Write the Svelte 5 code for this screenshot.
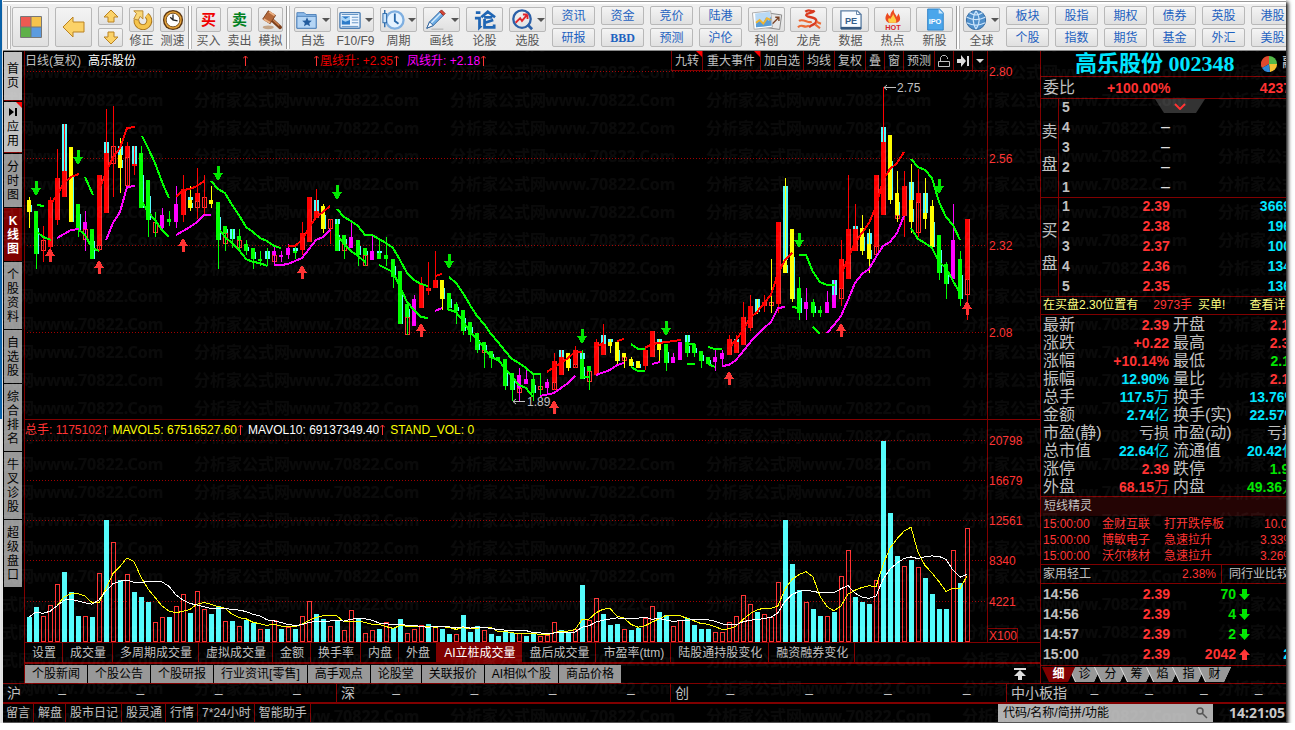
<script lang="ts">
  type Tool = { icon: string; label: string; drop?: boolean };

  const tradeTools: Tool[] = [
    { icon: 'buy', label: '买入' },
    { icon: 'sell', label: '卖出' },
    { icon: 'hammer', label: '模拟' }
  ];
  const viewTools: Tool[] = [
    { icon: 'folder', label: '自选', drop: true },
    { icon: 'news', label: 'F10/F9', drop: true },
    { icon: 'period', label: '周期', drop: true },
    { icon: 'pencil', label: '画线', drop: true },
    { icon: 'forum', label: '论股' },
    { icon: 'pick', label: '选股', drop: true }
  ];
  const dataTools: Tool[] = [
    { icon: 'photos', label: '科创' },
    { icon: 'dragon', label: '龙虎' },
    { icon: 'pe', label: '数据' },
    { icon: 'hot', label: '热点' },
    { icon: 'ipo', label: '新股' }
  ];
  const leftLinks = [['资讯', '研报'], ['资金', 'BBD'], ['竞价', '预测'], ['陆港', '沪伦']];
  const rightLinks = [
    ['板块', '个股'], ['股指', '指数'], ['期权', '期货'],
    ['债券', '基金'], ['英股', '外汇'], ['港股', '美股']
  ];

  const sideTabs = ['首页', '应用', '分时图', 'K线图', '个股资料', '自选股', '综合排名', '牛叉诊股', '超级盘口'];
  const chartTools = ['九转', '重大事件', '加自选', '均线', '复权', '叠', '窗', '预测'];
  const indicators = [
    '设置', '成交量', '多周期成交量', '虚拟成交量', '金额', '换手率', '内盘', '外盘',
    'AI立桩成交量', '盘后成交量', '市盈率(ttm)', '陆股通持股变化', '融资融券变化'
  ];
  const newsTabs = ['个股新闻', '个股公告', '个股研报', '行业资讯[零售]', '高手观点', '论股堂', '关联报价', 'AI相似个股', '商品价格'];
  const footLinks = ['留言', '解盘', '股市日记', '股灵通', '行情', '7*24小时', '智能助手'];
  const markets = ['沪', '深', '创', '中小板指'];
  const detailTabs = ['细', '诊', '分', '筹', '焰', '指', '财'];

  const bids = [['1', '2.39', '3669'], ['2', '2.38', '196'], ['3', '2.37', '100'], ['4', '2.36', '134'], ['5', '2.35', '136']];
  const asks = ['5', '4', '3', '2', '1'];

  // label, value, unit, tone for each half of a row
  const stats = [
    [['最新', '2.39', '', 'up'], ['开盘', '2.18', '', 'up']],
    [['涨跌', '+0.22', '', 'up'], ['最高', '2.39', '', 'up']],
    [['涨幅', '+10.14%', '', 'up'], ['最低', '2.11', '', 'down']],
    [['振幅', '12.90%', '', 'info'], ['量比', '2.15', '', 'up']],
    [['总手', '117.5', '万', 'info'], ['换手', '13.76%', '', 'info']],
    [['金额', '2.74', '亿', 'info'], ['换手(实)', '22.57%', '', 'info']],
    [['市盈(静)', '', '亏损', 'flat'], ['市盈(动)', '', '亏损', 'flat']],
    [['总市值', '22.64', '亿', 'info'], ['流通值', '20.42', '亿', 'info']],
    [['涨停', '2.39', '', 'up'], ['跌停', '1.95', '', 'down']],
    [['外盘', '68.15', '万', 'up'], ['内盘', '49.36', '万', 'down']]
  ];
  const alerts = [
    ['15:00:00', '金财互联', '打开跌停板', '10.02'],
    ['15:00:00', '博敏电子', '急速拉升', '3.33%'],
    ['15:00:00', '沃尔核材', '急速拉升', '3.26%']
  ];
  const ticks = [
    ['14:56', '2.39', '70', 'down', ''],
    ['14:56', '2.39', '4', 'down', ''],
    ['14:57', '2.39', '2', 'down', ''],
    ['15:00', '2.39', '2042', 'up', '2']
  ];

  const left = 29;
  const step = 7;
  const base = 642;
  const tones: Record<string, string> = { r: '#ff0000', y: '#ffff00', g: '#00ff00', m: '#ff00ff', c: '#54fcfc', h: '#ff3232' };

  // high low wick body...
  const candles = `197 228 y y200-212/211 269 g g211-254/226 262 r h240-251/197 250 r r200-247/149 225 r r178-220/124 197 r c124-171 r171-197/147 222 y y147-222/204 237 g g204-230/211 251 m m222-229 h229-240/229 259 g g229-259
/175 251 r r175-245 h245-250/109 213 r c142-153 r153-213/106 197 r h146-164/138 193 y c146-155 y155-168/142 186 r r146-157 h157-186/146 175 r c146-164 r164-166/146 208 g g153-208/180 237 g g180-220/212 237 g h222-233/208 232 m m215-228
/211 226 g g219-222/186 228 m m204-222/175 222 r r189-215/186 211 y c197-200 y200-208/168 219 r r193-201 h201-208/175 215 r h197-208/186 208 y y200-204/202 269 g g202-240/226 251 g g226-233 h233-244/229 248 g c229-239
/229 251 g g236-240 h240-248/240 255 g g244-251/248 269 g g248-259/251 266 g g259-261/248 266 g c251-259/247 266 m m251-255 h255-262/251 262 m m255-257/244 259 m m248-255/247 259 g c248-251 g251-253/222 255 r r233-250
/197 242 r r197-242/189 218 r c200-211 r211-218/204 233 y y206-229/219 244 r h219-229/219 251 g c219-224 g224-251/235 259 g g235-244 h244-251/221 248 m m237-248/240 266 g g240-255/248 266 g g248-255 h255-266/236 260 m m251-260
/240 259 g c251-253 g253-259/237 266 g g255-259/259 288 g g259-277/271 324 g g271-324/304 335 g g304-317 h317-335/295 326 m m299-326/277 308 r r284-308/262 295 r r288-291/251 288 r r280-288/280 310 y y280-299
/293 308 g g293-308/302 324 g g304-311/310 335 g g310-331/322 342 g g322-335/333 353 g g333-350/342 368 g g342-350 h350-353/351 368 g g351-358/357 361 g g357-361/359 390 g g359-386/373 401 g g373-390
/368 401 m m375-388 h388-393/369 384 m m379-384/374 401 g g379-393/374 396 g h386-390/379 394 m m382-388/353 390 r r361-382 h382-390/350 375 r c350-357 r357-375/353 371 y y353-368/346 368 r r350-364 h364-368/350 379 g c353-359 g359-379
/366 390 g g366-371 h371-382/339 375 r r342-375/324 355 r c335-344 r344-355/339 353 y c339-342 y342-346/342 364 y y342-361/353 368 y y353-357 h357-361/357 366 y y359-366/361 368 y y361-368/346 370 r r350-366/331 357 r r331-357
/339 361 y c339-344 y344-350/344 371 g g344-363/353 363 m m357-363/342 360 m m342-360/335 357 g c335-342 g342-353/344 357 g g344-353/351 368 g g351-361/357 364 g g357-364/349 371 m m357-362/350 366 m m353-359
/335 355 r r339-355/335 353 r c339-342 r342-353/302 345 r r317-345/295 331 r r306-328/299 314 y c299-312/295 312 r r302-306/259 313 y h302-306/222 313 r r222-304/178 273 y c186-260 y260-273/229 302 y y229-299
/277 320 g g288-313/288 320 m m302-309/299 317 g g302-313/306 317 g g310-313/291 313 m m302-313/280 308 m c280-295 m295-308/240 306 r r259-288 h288-299/175 279 r r229-279/204 251 r c226-229 r229-251/215 255 y y228-251
/229 273 y c233-244 y244-259/175 255 r r175-246 h246-255/87 215 r c127-142 r142-215/135 204 y y135-200/171 222 y y193-215 h215-219/171 237 r r186-216/164 233 y c182-200 y200-222/169 237 r r193-202 h202-233/178 229 y c193-213 y213-219/200 251 y y206-247
/235 280 g g235-273/262 299 g g264-284/204 279 m m240-279/251 306 g g259-299/219 320 r r219-279 h279-295`
    .replace(/\n/g, '')
    .split('/')
    .map((row, i) => {
      const [high, low, wick, ...parts] = row.split(' ');
      const bodies = parts.map((p) => {
        const [top, bottom] = p.slice(1).split('-').map(Number);
        return { kind: p[0], top, size: bottom - top };
      });
      return { x: left + i * step, high: +high, low: +low, wick: tones[wick], bodies };
    });

  const trends: [string, string[]][] = [
    ['r', [
      '50,205 57,195 64,183 71,177 79,174', '100,187 106,173 113,157 120,148 127,128 135,127',
      '176,197 183,190 190,189 197,186 204,181', '288,246 295,246 302,240 309,228 316,217 323,212 330,206',
      '435,276 442,274', '547,372 554,367 561,363 568,358 575,352 582,352', '595,348 603,343', '617,341 624,339',
      '645,348 652,344 666,342 681,340',
      '729,348 736,340 743,330 750,318 757,312 764,303 771,295 778,273 785,260 792,253',
      '841,275 848,258 855,243 862,233 869,223 876,207 883,180 890,169 897,163 904,152'
    ]],
    ['g', [
      '37,205 44,206', '85,177 89,186 93,195', '36,231 43,237 51,240', '77,228 85,235 92,248 99,251',
      '142,136 148,148 155,163 162,182 169,198', '141,200 148,212 155,220 162,230 169,237',
      '211,181 218,189 225,193 232,205 239,215 246,227 253,232 260,238 267,241 274,246 281,248',
      '218,228 225,237 232,243 239,250 246,259 253,262 260,263 267,266',
      '337,209 344,217 351,221 358,226 365,235 372,235 379,239 386,243 393,248 400,260 407,273 414,280 421,284 428,286',
      '337,235 344,244 351,251 358,256 365,262', '379,265 393,272 400,287 407,302 414,310 421,317 428,318',
      '449,277 456,283 463,293 470,305 477,316 484,324 491,334 498,342 505,351 512,359 519,363 526,368 533,374 541,374',
      '447,309 456,312 463,321 470,332 477,339 484,348 491,357 498,360 505,368 512,377 519,385 526,388 533,397',
      '580,377 589,377', '631,344 638,349 645,349', '631,367 638,371 645,371', '687,344 695,344', '687,364 695,364',
      '708,347 715,349 722,349', '708,364 715,367', '799,255 806,255 813,272 820,282 827,285 835,285',
      '792,307 799,308', '813,327 820,334',
      '911,159 918,167 925,170 932,178 939,202 946,217 953,225 960,240',
      '911,228 918,239 925,243 932,248 939,262 946,268 953,281 960,293'
    ]],
    ['m', [
      '57,238 71,230 79,229', '106,240 113,223 120,212 127,187 135,186', '176,235 190,227 197,222 204,215 211,215',
      '274,265 281,265 288,264 295,261 302,258 309,249 316,240 323,237 330,230', '435,311 442,308',
      '540,396 554,393 561,388 568,383 575,376', '596,375 610,370 617,365 624,363', '652,364 660,362',
      '722,366 729,365 736,360 753,339 764,328 771,322 778,308 785,307',
      '827,333 834,325 841,316 848,300 855,283 862,274 869,269 876,257 883,246 890,242 897,233 904,216'
    ]]
  ];
  const sells = [[36, 188], [78, 157], [218, 173], [337, 192], [449, 261], [582, 336], [666, 328], [799, 240], [939, 186]];
  const buys = [[50, 255], [99, 267], [183, 245], [302, 272], [421, 330], [554, 407], [729, 378], [841, 330], [967, 308]];

  const volumes = `25c 35c 26r 37r 58r 70c 50c 26c 26r 25c 69r 122c 100r 62c 68r 50c 45c 40c 20r 25r 25c 36r 48r 29c 51r 33r 28c 36c 21r 21c
16r 22c 19c 13r 13c 22r 13c 15r 13c 26r 41r 28c 23c 16r 22c 12r 32r 23c 9r 12r 13c 20r 14c 23c 9r 13r 17r 18c 16r 13c
8c 8r 27c 10c 16c 12r 8c 6c 11c 9c 9r 6c 8c 6r 7r 20r 12c 10c 13r 57c 22r 44r 28c 17c 18c 13r 12c 14c 24r 36r
30c 27c 16r 22r 24c 17c 13c 13c 10r 10r 20r 26r 47r 38r 30c 28r 25r 60r 122c 78c 52c 40r 33c 26c 26r 30c 66r 92r 45c 40c
38c 62r 201c 129c 86c 76r 82c 75r 64c 48c 33c 33c 92r 59c 114r`
    .split(/\s+/)
    .map((v, i) => ({ x: left + i * step, size: parseInt(v), down: v.endsWith('c') }));

  function average(span: number): string {
    return volumes
      .map((v, i) => {
        const part = volumes.slice(Math.max(0, i - span + 1), i + 1);
        const mean = part.reduce((sum, p) => sum + p.size, 0) / part.length;
        return `${v.x},${(base - mean).toFixed(1)}`;
      })
      .join(' ');
  }

  const priceLines: [number, string][] = [[71, '2.80'], [158, '2.56'], [245, '2.32'], [332, '2.08']];
  const volumeLines: [number, string][] = [[441, '20798'], [481, '16679'], [521, '12561'], [561, '8340'], [602, '4221']];

  let activeSide = $state('K线图');
  let activeIndicator = $state('AI立桩成交量');
  let activeDetail = $state('细');
  let query = $state('');
</script>

{#snippet icon(name: string)}
  <svg class="icon" viewBox="0 0 24 24" width="24" height="24" aria-hidden="true">
    {#if name === 'repair'}
      <path d="M6 12 A7 7 0 1 0 17 7" fill="none" stroke="#a8741c" stroke-width="6.500" />
      <path d="M6 12 A7 7 0 1 0 17 7" fill="none" stroke="#f5c44c" stroke-width="4.500" />
      <path d="M3 2 H13 V11 L10 8 L8 12 L3 11 L6 5 Z" fill="#f9d778" stroke="#b8842a" />
    {:else if name === 'clock'}
      <circle cx="12" cy="12" r="11" fill="#5a3510" />
      <circle cx="12" cy="12" r="9.500" fill="#e9a63a" />
      <circle cx="12" cy="12" r="7.500" fill="#fff" stroke="#6b4518" />
      <path d="M12 6 V12 L17 13 M12 12 L9 9" fill="none" stroke="#222" stroke-width="1.400" />
    {:else if name === 'hammer'}
      <path d="M11 10 L22 20" stroke="#7d3f1b" stroke-width="4" stroke-linecap="round" />
      <path d="M11 9 L21 18" stroke="#c98150" stroke-width="1.500" />
      <path d="M9 2 L17 7 L11 16 L3 11 Z" fill="#b4693b" stroke="#7a401f" />
      <path d="M10 3 L16 7 M4 11 L11 15" stroke="#ecb184" stroke-width="2" />
      <ellipse cx="9" cy="20" rx="6" ry="2" fill="#c4a487" />
    {:else if name === 'folder'}
      <path d="M1 4 H9 L11 6 H22 V21 H1 Z" fill="#8dbbea" stroke="#4b7fb8" />
      <path d="M1 8 H22 V21 H1 Z" fill="#b4d5f5" stroke="#4b7fb8" />
      <path d="M12 9 l1.500 3.500 3.800 .3 -2.900 2.400 .9 3.700 -3.300 -2 -3.300 2 .9 -3.700 -2.900 -2.400 3.800 -.3 Z" fill="#235c9e" />
    {:else if name === 'news'}
      <rect x="1" y="4" width="22" height="17" rx="1" fill="#eef6ff" stroke="#4d7fb5" stroke-width="1.500" />
      <rect x="3" y="8" width="9" height="9" fill="#2e7cc9" />
      <path d="M3 8 L7 11 L12 8 V12 L7 14 L3 12 Z" fill="#a9d5f8" />
      <path d="M3 6 H21 M14 9 H21 M14 12 H21 M14 15 H21 M3 19 H21" stroke="#5a8dc2" />
    {:else if name === 'period'}
      <circle cx="14" cy="12" r="9.500" fill="#e4f2ff" stroke="#7fafe0" stroke-width="2.500" />
      <path d="M14 5 V13 L18 16" fill="none" stroke="#2868aa" stroke-width="2" />
      <path d="M3 1 V20" stroke="#2868aa" stroke-width="1.500" />
      <rect x="1" y="5" width="4" height="10" fill="#cce4fa" stroke="#2868aa" />
    {:else if name === 'pencil'}
      <path d="M2 21 L5 14 L16 3 L20 7 L9 18 Z" fill="#6eaee6" stroke="#2c5f99" />
      <path d="M16 3 L18 1 L22 5 L20 7 Z" fill="#d84436" stroke="#8f2b22" />
      <path d="M2 21 L5 14 L9 18 Z" fill="#fff" stroke="#2c5f99" />
      <path d="M7 15 L17 5" stroke="#d7ecfd" stroke-width="1.500" />
      <path d="M7 22 H20" stroke="#bbb" stroke-width="1.500" />
    {:else if name === 'forum'}
      <path d="M2 4 H7 M1 10 H6 V20 L8 18 M8 9 L15 3 L23 9 M11 9 H20 M11.500 11 V20 H22 V17 M21 12 L12 15" fill="none" stroke="#2066b4" stroke-width="3" />
    {:else if name === 'pick'}
      <circle cx="12" cy="11" r="9.500" fill="none" stroke="#2b60a8" stroke-width="2.500" />
      <path d="M18 17 L23 22" stroke="#2b60a8" stroke-width="3" />
      <path d="M5 15 L10 10 L12 13 L17 7 M18 6 H13 M18 6 V11" fill="none" stroke="#e0262d" stroke-width="2" />
    {:else if name === 'photos'}
      <rect x="12" y="5" width="15" height="16" fill="#e6e6e6" stroke="#888" transform="rotate(8 17 13)" />
      <path d="M18 16 L25 9 M21 9 H25 V13" fill="none" stroke="#7a4326" stroke-width="1.500" />
      <rect x="-3" y="3" width="20" height="18" fill="#fff" stroke="#aaa" transform="rotate(-6 8 12)" />
      <path d="M-1 5 L15 3 L17 18 L0 20 Z" fill="#b9d9f4" />
      <path d="M0 16 L4 12 L8 15 L11 9 L14 13 L16 8 L17 18 L0 20 Z" fill="#5b9dd6" />
      <path d="M0 15 L4 12 L8 16 L12 10 L16 12" fill="none" stroke="#f1b52e" stroke-width="2" />
    {:else if name === 'dragon'}
      <path d="M8 3 C13 -1 14 4 18 2 C15 6 9 3 9 7 C11 10 20 8 20 13 C20 17 14 17 12 20" fill="none" stroke="#d83a20" stroke-width="2.600" />
      <path d="M1 13 C6 10 11 16 15 14 M0 20 C4 15 7 22 12 18 M19 17 L24 21 M20 14 L25 16" fill="none" stroke="#ec6a35" stroke-width="2.400" />
    {:else if name === 'pe'}
      <path d="M1 2 H19 L23 6 V21 H1 Z" fill="#f8fbff" stroke="#5e7fa4" stroke-width="1.500" />
      <path d="M18 2 V6 H23" fill="none" stroke="#5e7fa4" />
      <path d="M1 21 H23" stroke="#35587f" stroke-width="3" />
      <text x="12" y="16" class="glyph" fill="#36608d">PE</text>
    {:else if name === 'hot'}
      <path d="M7 15 C1 11 5 6 6 4 C7 7 8 7 9 8 C9 5 10 3 13 0 C12 5 16 6 16 9 L18 5 C21 11 20 14 16 15 Z" fill="#ec4a20" />
      <path d="M8 15 C5 11 8 9 9 11 C10 9 12 8 12 5 C13 9 17 12 15 15 Z" fill="#ffcf45" />
      <text x="12" y="23" class="glyph small" fill="#d9292b">HOT</text>
    {:else if name === 'ipo'}
      <path d="M4 0 H17 L21 4 V23 H4 Z" fill="#4ba6eb" stroke="#2c7fc4" />
      <path d="M16 0 V5 H21 Z" fill="#cfe8fb" />
      <text x="12" y="16" class="glyph small" fill="#fff">IPO</text>
    {:else if name === 'globe'}
      <circle cx="12" cy="12" r="10.500" fill="#4f8fca" stroke="#2d649c" />
      <path d="M2 9 Q12 14 22 9 M2 15 Q12 20 22 15 M12 2 Q6 12 12 22 M12 2 Q19 12 12 22 M5 4 Q12 9 19 4" fill="none" stroke="#cbe4fa" stroke-width="1.400" />
    {/if}
  </svg>
{/snippet}

{#snippet rise()}
  <svg class="rise" viewBox="0 0 5 11" width="5" height="11" aria-hidden="true"><path d="M2.500 1 V11 M0 3.500 L2.500 1 L5 3.500" /></svg>
{/snippet}

{#snippet toolItem(tool: Tool, wide: boolean)}
  <button type="button" class="tool" class:wide>
    <span class="face">
      {#if tool.icon === 'buy' || tool.icon === 'sell'}
        <b class={tool.icon}>{tool.label[0]}</b>
      {:else}
        {@render icon(tool.icon)}
      {/if}
      {#if tool.drop}<i class="drop"></i>{/if}
    </span>
    <span class="caption">{tool.label}</span>
  </button>
{/snippet}

{#snippet linkPair(pair: string[])}
  <div class="stack">
    {#each pair as name}
      <button type="button" class="link" class:serif={name === 'BBD'}>{name}</button>
    {/each}
  </div>
{/snippet}

{#snippet mark(x: number, y: number, up: boolean)}
  <path
    d={up
      ? `M${x} ${y - 7} l5 8 h-3 v6 h-3 v-6 h-4 z`
      : `M${x} ${y + 8} l5 -8 h-3 v-7 h-3 v7 h-4 z`}
    fill={up ? '#ff3232' : '#00e600'}
  />
{/snippet}

<div class="window">
  <div class="toolbar">
    <i class="grip"></i>
    <button type="button" class="big" aria-label="首页">
      <svg viewBox="0 0 22 22" width="22" height="22">
        <rect x="1" y="1" width="10" height="10" fill="#ee5a52" />
        <rect x="11" y="1" width="10" height="10" fill="#f5c34c" />
        <rect x="1" y="11" width="10" height="10" fill="#5fb04a" />
        <rect x="11" y="11" width="10" height="10" fill="#5b9bdf" />
        <path d="M.5 .5 H21.500 V21.500 H.5 Z M11 1 V21 M1 11 H21" fill="none" stroke="#777" />
      </svg>
    </button>
    <button type="button" class="big" aria-label="返回">
      <svg viewBox="0 0 24 22" width="24" height="22">
        <path d="M1 11 L11 1 V6 H22 V16 H11 V21 Z" fill="#fbd268" stroke="#b98222" />
      </svg>
    </button>
    <div class="stack arrows">
      <button type="button" class="link" aria-label="上翻">
        <svg viewBox="0 0 16 14" width="16" height="14"><path d="M8 1 L15 8 H11 V13 H5 V8 H1 Z" fill="#fbd268" stroke="#b98222" /></svg>
      </button>
      <button type="button" class="link" aria-label="下翻">
        <svg viewBox="0 0 16 14" width="16" height="14"><path d="M8 13 L15 6 H11 V1 H5 V6 H1 Z" fill="#fbd268" stroke="#b98222" /></svg>
      </button>
    </div>
    {@render toolItem({ icon: 'repair', label: '修正' }, false)}
    {@render toolItem({ icon: 'clock', label: '测速' }, false)}
    <i class="grip split"></i>
    {#each tradeTools as tool}{@render toolItem(tool, false)}{/each}
    <i class="grip split"></i>
    {#each viewTools as tool}{@render toolItem(tool, true)}{/each}
    {#each leftLinks as pair}{@render linkPair(pair)}{/each}
    <div class="group">
      {#each dataTools as tool}{@render toolItem(tool, true)}{/each}
    </div>
    <i class="grip"></i>
    {@render toolItem({ icon: 'globe', label: '全球', drop: true }, true)}
    {#each rightLinks as pair}{@render linkPair(pair)}{/each}
  </div>

  <div class="main">
    <nav class="side">
      {#each sideTabs as name, i}
        <button type="button" class:light={i < 2} class:active={activeSide === name} onclick={() => (activeSide = name)}>
          {#if name === '应用'}
            <svg viewBox="0 0 8 8" width="8" height="8" aria-hidden="true"><path d="M0 0 L5 4 L0 8 Z M6 0 H8 V8 H6 Z" /></svg>
            <i class="corner"></i>
          {/if}
          <span>{name}</span>
        </button>
      {/each}
    </nav>

    <section class="charts">
      <header class="chart-head">
        <div class="titles">
          <span>日线(复权)</span>
          <span class="white">高乐股份</span>
          <span class="signal first">{@render rise()}</span>
          <span class="signal second">{@render rise()}凰线升: +2.35{@render rise()}</span>
          <span class="magenta">凤线升: +2.18{@render rise()}</span>
        </div>
        <div class="chart-tools">
          {#each chartTools as name, i}
            <button type="button">{name}{#if i < 2}<i class="corner"></i>{/if}</button>
          {/each}
          <button type="button" aria-label="锁定">
            <svg viewBox="0 0 12 14" width="12" height="14"><path d="M.5 7.500 H11.500 V12.500 H.5 Z M2.500 7 V3.500 L4.500 1.500 H7.500 L9.500 3.500 V5" fill="none" stroke="#c0c0c0" /></svg>
          </button>
          <button type="button" aria-label="最新">
            <svg viewBox="0 0 12 12" width="12" height="12"><path d="M0 4 H4 V0 L9 6 L4 12 V8 H0 Z M10 1 H12 V11 H10 Z" fill="#ddd" /></svg>
          </button>
          <button type="button" aria-label="更多"><i class="drop pale"></i></button>
        </div>
      </header>

      <svg class="plot" viewBox="25 71 1015 348" role="img" aria-label="日线">
        <g shape-rendering="crispEdges">
          {#each priceLines as [y]}
            <path class="grid" d={`M27 ${y + 0.5} H987`} />
          {/each}
          <path class="frame" d="M987.500 71 V419" />
          {#each candles as c}
            {#each c.bodies as b}
              {#if b.kind === 'h'}
                <rect x={c.x - 1.5} y={b.top + 0.5} width="4" height={Math.max(1, b.size - 1)} fill="none" stroke={tones.h} />
              {:else}
                <rect x={c.x - 2} y={b.top} width={b.kind === 'c' ? 5 : 4} height={b.size} fill={tones[b.kind]} />
                {#if b.kind === 'r'}
                  <rect x={c.x + 2} y={b.top} width="1" height={b.size} fill={tones.h} />
                {:else if b.kind !== 'c' && b.kind !== 'm' && b.size > 6}
                  <rect x={c.x + 2} y={b.top + b.size * 0.4} width="1" height={b.size * 0.6} fill={tones.c} />
                {/if}
              {/if}
            {/each}
            <rect x={c.x} y={c.high} width="1" height={c.low - c.high} fill={c.wick} />
          {/each}
          {#each trends as [tone, lines]}
            {#each lines as points}
              <polyline {points} fill="none" stroke={tones[tone]} stroke-width="2" />
            {/each}
          {/each}
          {#each sells as [x, y]}{@render mark(x, y, false)}{/each}
          {#each buys as [x, y]}{@render mark(x, y, true)}{/each}
        </g>
        <path d="M884 87.500 H896 M887 85 L884 87.500 L887 90 M513 401.500 H525 M516 399 L513 401.500 L516 404" fill="none" stroke="#c0c0c0" />
        <text class="note" x="897" y="92">2.75</text>
        <text class="note" x="527" y="406">1.89</text>
        {#each priceLines as [y, label]}
          <text class="scale" x="989" y={y + 5}>{label}</text>
        {/each}
      </svg>

      <div class="volume-head">
        <span class="red">总手: 1175102{@render rise()}</span>
        <span class="yellow">MAVOL5: 67516527.60{@render rise()}</span>
        <span class="white">MAVOL10: 69137349.40{@render rise()}</span>
        <span class="yellow">STAND_VOL: 0</span>
      </div>

      <svg class="plot" viewBox="25 440 1015 202" role="img" aria-label="成交量">
        <g shape-rendering="crispEdges">
          {#each volumeLines as [y]}
            <path class="grid" d={`M27 ${y - 0.5} H987`} />
          {/each}
          <path class="frame" d="M987.500 419 V642 M988 628.500 H1017.500 V642" />
          {#each volumes as v}
            {#if v.down}
              <rect x={v.x - 2} y={base - v.size} width="5" height={v.size} fill={tones.c} />
            {:else}
              <rect x={v.x - 1.5} y={base - v.size + 0.5} width="4" height={v.size - 1} fill="none" stroke={tones.h} />
            {/if}
          {/each}
          <polyline points={average(5)} fill="none" stroke="#ffff00" />
          <polyline points={average(10)} fill="none" stroke="#ffffff" />
        </g>
        {#each volumeLines as [y, label]}
          <text class="scale" x="989" y={y + 4}>{label}</text>
        {/each}
        <text class="scale" x="989" y="640">X100</text>
      </svg>

      <div class="indicators">
        {#each indicators as name}
          <button type="button" class:active={activeIndicator === name} onclick={() => (activeIndicator = name)}>{name}</button>
        {/each}
      </div>
      <div class="news-tabs">
        {#each newsTabs as name}<button type="button">{name}</button>{/each}
        <svg viewBox="0 0 12 12" width="12" height="12" aria-hidden="true"><path d="M0 0 H12 V2 H0 Z M6 2 L12 8 H8 V12 H4 V8 H0 Z" fill="#ddd" /></svg>
      </div>
    </section>

    <aside class="quote">
      <div class="sheet">
        <h1>
          高乐股份 002348
          <svg viewBox="0 0 16 16" width="16" height="16" aria-hidden="true">
            <path d="M8 8 V0 A8 8 0 0 0 1 12 Z" fill="#e0492d" />
            <path d="M8 8 V0 A8 8 0 0 1 16 8 Z" fill="#54b948" />
            <path d="M8 8 H16 A8 8 0 0 1 9 16 Z" fill="#f5c030" />
            <path d="M8 8 L9 16 A8 8 0 0 1 1 12 Z" fill="#2c86d6" />
          </svg>
          <small>融</small>
        </h1>
        <div class="ratio"><span>委比</span><b class="up">+100.00%</b><b class="up end">4237</b></div>
        <div class="book">
          <div class="book-side"><span>卖</span><span>盘</span></div>
          <div class="levels">
            {#each asks as level, i}
              <div class="level"><b>{level}</b><span class="blank">{i > 0 ? '–' : ''}</span></div>
            {/each}
            <button type="button" class="fold" aria-label="展开"><svg viewBox="0 0 12 7" width="12" height="7"><path d="M1 1 L6 6 L11 1" /></svg></button>
          </div>
        </div>
        <div class="book">
          <div class="book-side"><span>买</span><span>盘</span></div>
          <div class="levels">
            {#each bids as [level, price, size]}
              <div class="level"><b>{level}</b><b class="up">{price}</b><b class="info end">{size}</b></div>
            {/each}
          </div>
        </div>
        <div class="tip"><span>在买盘2.30位置有</span><span class="red">2973手</span><span>买单!</span><span class="more">查看详情</span></div>
        <div class="stats">
          {#each stats as row}
            {#each row as [label, value, unit, tone]}
              <span class="label">{label}</span>
              <b class={tone}>{value}{#if unit}<span class="unit">{unit}</span>{/if}</b>
            {/each}
          {/each}
        </div>
        <h2>短线精灵</h2>
        <div class="alerts">
          {#each alerts as row}
            <div>{#each row as cell}<span>{cell}</span>{/each}</div>
          {/each}
        </div>
        <div class="industry"><span>家用轻工</span><span class="red">2.38%</span><span class="peer">同行业比较</span></div>
        <div class="ticks">
          {#each ticks as [time, price, size, tone, orders]}
            <div class="tick">
              <b>{time}</b><b class="up">{price}</b><b class={tone}>{size}</b>
              <svg viewBox="0 0 11 11" width="11" height="11" aria-hidden="true">
                <path class={tone} d={tone === 'up' ? 'M5.500 0 L11 6 H8 V11 H3 V6 H0 Z' : 'M5.500 11 L11 5 H8 V0 H3 V5 H0 Z'} />
              </svg>
              <b class="info">{orders}</b>
            </div>
          {/each}
        </div>
        <div class="detail-tabs">
          {#each detailTabs as name}
            <button type="button" class:active={activeDetail === name} onclick={() => (activeDetail = name)}>{name}</button>
          {/each}
        </div>
      </div>
    </aside>
  </div>

  <div class="markets">
    {#each markets as name}
      <div><span class="name">{name}</span><span>–</span><span>–</span><span>–</span><span>–</span></div>
    {/each}
  </div>

  <footer>
    {#each footLinks as name}<a href="#foot">{name}</a>{/each}
    <div class="search">
      <input type="text" bind:value={query} placeholder="代码/名称/简拼/功能" aria-label="代码/名称/简拼/功能" />
      <svg viewBox="0 0 12 12" width="12" height="12" aria-hidden="true"><circle cx="4" cy="4" r="3" /><path d="M6 6 L11 11" /></svg>
    </div>
    <time>14:21:05</time>
  </footer>

  <svg class="watermark" aria-hidden="true">
    <defs>
      <pattern id="mark" width="256" height="28" patternUnits="userSpaceOnUse" x="191" y="8">
        <text x="0" y="19">分析家公式网</text>
        <text x="95" y="19">www.70822.Com</text>
      </pattern>
    </defs>
    <rect width="100%" height="100%" fill="url(#mark)" />
  </svg>
</div>

<style>
  :global(body) {
    margin: 0;
    background: linear-gradient(#0a64ad 58%, #e8e8e8 58%) 0 0 / 2px 100% no-repeat #fff;
  }

  .window {
    position: relative;
    margin: 0 9px 0 3px;
    background: #000;
    color: #c0c0c0;
    font: 12px/18px 'Liberation Sans', 'Noto Sans CJK SC', sans-serif;
    box-shadow: 2px 2px 4px #000;
    border-bottom: 1px solid #555;
  }

  .window * {
    box-sizing: border-box;
  }

  button {
    margin: 0;
    padding: 0;
    border: 0;
    background: none;
    color: inherit;
    font: inherit;
    white-space: nowrap;
  }

  i {
    font-style: normal;
  }

  .toolbar {
    display: flex;
    gap: 6px;
    height: 51px;
    padding: 3px 0 0 4px;
    overflow: hidden;
    border-top: 1px solid #fff;
    border-bottom: 1px solid #888;
    background: linear-gradient(#999 0, #999 1px, #fff 1px, #fff 3px, #efefef 3px, #ececec 100%);
    color: #555;
  }

  .toolbar > * {
    flex: none;
  }

  .group {
    display: flex;
    gap: 5px;
  }

  .grip {
    width: 4px;
    height: 43px;
    margin: 2px -3px 0 -3px;
    border-left: 1px solid #999;
    border-right: 1px solid #bbb;
    background: #fff;
  }

  .grip.split {
    margin-right: -2px;
  }

  .toolbar > .grip:first-child {
    margin-left: 0;
    margin-right: -5px;
  }

  .big,
  .face,
  .link {
    display: flex;
    align-items: center;
    justify-content: center;
    border: 1px solid #b8b8b8;
    border-radius: 2px;
    background: linear-gradient(#f4f4f4, #e0e0e0);
  }

  .big {
    width: 37px;
    height: 40px;
    margin-top: 3px;
  }

  .stack {
    display: flex;
    flex-direction: column;
    gap: 3px;
    width: 43px;
    padding-top: 2px;
  }

  .stack.arrows {
    width: 25px;
  }

  .link {
    height: 19px;
    color: #1e62c0;
    line-height: 16px;
  }

  .link.serif {
    font-family: 'Liberation Serif', serif;
    font-weight: bold;
  }

  .tool {
    display: flex;
    flex-direction: column;
    align-items: center;
    width: 25px;
    padding-top: 3px;
  }

  .tool.wide {
    width: 37px;
  }

  .face {
    width: 100%;
    height: 25px;
  }

  .face .icon {
    flex: none;
    width: 22px;
    height: 22px;
    overflow: visible;
  }

  .face b {
    font-size: 15px;
  }

  .buy {
    color: #f00000;
  }

  .sell {
    color: #008020;
  }

  .caption {
    line-height: 18px;
  }

  .drop {
    width: 0;
    height: 0;
    margin-left: 4px;
    border: 4px solid transparent;
    border-top-color: #555;
    border-bottom: 0;
  }

  .drop.pale {
    display: block;
    margin: 0;
    border-top-color: #ddd;
  }

  .glyph {
    font: bold 10px 'Liberation Sans', sans-serif;
    text-anchor: middle;
  }

  .glyph.small {
    font-size: 8px;
  }

  .main {
    display: flex;
    border-bottom: 1px solid #800000;
  }

  .side {
    display: flex;
    flex: none;
    flex-direction: column;
    gap: 1px;
    width: 22px;
    padding: 1px 2px 0 1px;
    border-right: 1px solid #800000;
    color: #000;
  }

  .side button {
    position: relative;
    display: flex;
    flex-direction: column;
    align-items: center;
    padding: 6px 0 5px;
    background: #989898;
    line-height: 14px;
    white-space: normal;
  }

  .side button.light {
    padding: 10px 0;
    background: #c0c0c0;
    border-bottom: 1px solid #800000;
  }

  .side button.light + .light {
    padding: 6px 0 4px;
  }

  .side button.active {
    background: #800000;
    color: #fff;
    font-weight: bold;
  }

  .side svg {
    margin-bottom: 4px;
  }

  .side span {
    width: 13px;
    word-break: break-all;
  }

  .corner {
    position: absolute;
    top: 0;
    right: 0;
    border: 3px solid #f00;
    border-left-color: transparent;
    border-bottom-color: transparent;
  }

  .charts {
    flex: 1;
    min-width: 0;
  }

  .chart-head {
    display: flex;
    justify-content: space-between;
    height: 20px;
    margin-right: 52px;
    border-right: 1px solid #800000;
  }

  .titles,
  .chart-tools,
  .volume-head {
    display: flex;
    white-space: nowrap;
  }

  .titles {
    gap: 7px;
    line-height: 20px;
  }

  .signal {
    color: #f00000;
  }

  .signal.first {
    margin-left: 99px;
  }

  .signal.second {
    margin-left: 57px;
  }

  .rise {
    margin: 0 1px;
    fill: none;
    stroke: #ff3232;
    vertical-align: -1px;
  }

  .white {
    color: #fff;
  }

  .magenta {
    color: #ff00ff;
  }

  .yellow {
    color: #ffff00;
  }

  .red {
    color: #ff3232;
  }

  .chart-tools button {
    position: relative;
    display: flex;
    align-items: center;
    padding: 0 3px;
    border: 1px solid #800000;
    border-width: 0 0 1px 1px;
  }

  .chart-tools button:nth-child(2) {
    padding: 0 5px 0 4px;
  }

  .plot {
    display: block;
    width: 100%;
    overflow: visible;
  }

  .grid {
    stroke: #a00000;
    stroke-dasharray: 1 2;
  }

  .frame {
    fill: none;
    stroke: #800000;
  }

  .scale {
    fill: #ff3232;
    font-size: 12px;
  }

  .note {
    fill: #c0c0c0;
    font-size: 12px;
  }

  .volume-head {
    gap: 4px;
    height: 21px;
    border-top: 1px solid #800000;
    line-height: 20px;
  }

  .indicators {
    display: flex;
    height: 21px;
    border: 1px solid #800000;
    border-width: 1px 0 1px;
  }

  .indicators button {
    padding: 0 6px 0 7px;
    border-right: 1px solid #800000;
  }

  .indicators .active {
    background: #800000;
    color: #fff;
  }

  .news-tabs {
    display: flex;
    align-items: center;
    gap: 1px;
    height: 20px;
    padding-right: 14px;
    border-top: 1px solid #800000;
  }

  .news-tabs button {
    height: 18px;
    padding: 0 7px;
    background: #989898;
    color: #000;
  }

  .news-tabs svg {
    margin-left: auto;
  }

  .quote {
    flex: none;
    width: 246px;
    overflow: hidden;
    border-left: 1px solid #800000;
  }

  .sheet {
    width: 257px;
  }

  .sheet b {
    font-size: 14px;
  }

  .end {
    margin-left: auto;
  }

  .up {
    color: #ff3232;
    fill: #ff3232;
  }

  .down {
    color: #00e600;
    fill: #00e600;
  }

  .info {
    color: #00e5ff;
  }

  h1 {
    display: flex;
    align-items: center;
    height: 25px;
    margin: 0;
    padding-left: 34px;
    color: #00e5ff;
    font: bold 22px/25px 'Liberation Serif', 'Noto Sans CJK SC', serif;
    white-space: nowrap;
  }

  h1 svg {
    margin: 0 6px 0 26px;
  }

  h1 small {
    color: #c0c0c0;
    font-size: 12px;
  }

  .ratio {
    display: flex;
    align-items: center;
    height: 22px;
    padding: 0 7px 0 2px;
    border-top: 1px solid #800000;
    font-size: 16px;
  }

  .ratio b:nth-child(2) {
    margin-left: 32px;
  }

  .book {
    display: flex;
    height: 99px;
    border-top: 1px solid #800000;
  }

  .book-side {
    display: flex;
    flex: none;
    flex-direction: column;
    justify-content: space-around;
    width: 18px;
    padding: 16px 0;
    border-right: 1px solid #800000;
    font-size: 16px;
    text-align: center;
  }

  .levels {
    position: relative;
    flex: 1;
    padding-right: 7px;
  }

  .level {
    display: flex;
    height: 20px;
    padding-left: 3px;
    line-height: 16px;
  }

  .level b:nth-child(2) {
    width: 100px;
    text-align: right;
  }

  .blank {
    width: 100px;
    color: #ddd;
    font-size: 16px;
    text-align: right;
  }

  .fold {
    position: absolute;
    top: 0;
    left: 96px;
    width: 50px;
    height: 14px;
    background: #333;
    clip-path: polygon(0 0, 100% 0, 41px 100%, 9px 100%);
  }

  .fold svg {
    display: block;
    margin: 0 auto;
    fill: none;
    stroke: #ff3232;
    stroke-width: 2;
  }

  .tip {
    display: flex;
    gap: 6px;
    height: 18px;
    padding-left: 2px;
    border-top: 1px solid #800000;
    color: #ffff80;
    line-height: 17px;
    white-space: nowrap;
  }

  .tip .red {
    margin-left: 9px;
  }

  .tip .more {
    margin-left: 18px;
  }

  .stats {
    display: grid;
    grid-template-columns: 62px 64px 72px 56px;
    padding: 1px 0 0 2px;
    border-top: 1px solid #800000;
    font-size: 16px;
    line-height: 18px;
    white-space: nowrap;
  }

  .stats b {
    height: 18px;
    text-align: right;
  }

  .label:nth-child(4n + 3) {
    padding-left: 4px;
  }

  .unit {
    font-size: 15px;
    font-weight: normal;
  }

  h2 {
    height: 20px;
    margin: 0;
    padding-left: 3px;
    border-top: 1px solid #800000;
    background: #240404;
    font: inherit;
  }

  .alerts {
    color: #ff3232;
    line-height: 16px;
  }

  .alerts div {
    display: grid;
    grid-template-columns: 59px 62px 90px 40px;
    padding-left: 2px;
  }

  .alerts span:last-child {
    text-align: right;
  }

  .industry {
    display: flex;
    height: 20px;
    padding-left: 2px;
    border: 1px solid #800000;
    border-width: 1px 0;
    white-space: nowrap;
  }

  .industry .red {
    width: 130px;
    padding-right: 5px;
    text-align: right;
  }

  .peer {
    padding-left: 7px;
    border-left: 1px solid #800000;
  }

  .tick {
    display: grid;
    grid-template-columns: 50px 77px 66px 11px 1fr;
    align-items: center;
    padding-left: 2px;
    line-height: 20px;
  }

  .tick b:not(:first-child) {
    text-align: right;
  }

  .tick svg {
    margin-left: 3px;
    overflow: visible;
  }

  .tick b.info {
    padding-right: 7px;
  }

  .detail-tabs {
    display: flex;
    margin-top: 1px;
    padding: 1px 0 0 1px;
    border-top: 1px solid #800000;
  }

  .detail-tabs button {
    position: relative;
    width: 33px;
    height: 15px;
    margin-right: -7px;
    background: #ddd;
    color: #000;
    line-height: 15px;
    clip-path: polygon(0 0, 100% 0, calc(100% - 7px) 100%, 7px 100%);
    isolation: isolate;
  }

  .detail-tabs button::before {
    content: '';
    position: absolute;
    inset: 0;
    z-index: -1;
    background: #989898;
    clip-path: polygon(1px 0, 100% 0, calc(100% - 7px) 100%, 8px 100%);
  }

  .detail-tabs .active {
    z-index: 1;
    background: #800000;
    color: #fff;
    font-weight: bold;
  }

  .detail-tabs .active::before {
    background: #800000;
  }

  .markets {
    display: grid;
    grid-template-columns: 334fr 334fr 336fr 279fr;
    height: 20px;
    border-bottom: 2px solid #800000;
    overflow: hidden;
  }

  .markets div {
    display: grid;
    grid-template-columns: 16px repeat(4, 1fr);
    padding-left: 4px;
    border-right: 1px solid #800000;
    font-size: 14px;
    text-align: center;
    white-space: nowrap;
  }

  .markets div:last-child {
    grid-template-columns: 56px repeat(4, 1fr);
    border-right: 0;
  }

  .name {
    text-align: left;
  }

  footer {
    display: flex;
    height: 18px;
  }

  footer a {
    padding: 0 3px 0 4px;
    border-right: 1px solid #800000;
    color: inherit;
    text-decoration: none;
  }

  footer a:first-child {
    padding-left: 3px;
  }

  .search {
    display: flex;
    align-items: center;
    width: 215px;
    margin-left: auto;
    padding: 0 5px;
    background: #b0b0b0;
  }

  .search input {
    flex: 1;
    min-width: 0;
    padding: 0;
    border: 0;
    outline: 0;
    background: none;
    color: #000;
    font: inherit;
  }

  .search input::placeholder {
    color: #000;
    opacity: 1;
  }

  .search svg {
    fill: none;
    stroke: #555;
    stroke-width: 1.5;
  }

  time {
    width: 73px;
    padding-right: 1px;
    color: #c8c8c8;
    font: bold 14px/18px 'Noto Sans', sans-serif;
    text-align: right;
  }

  .watermark {
    position: absolute;
    top: 51px;
    left: 0;
    width: 100%;
    height: calc(100% - 51px);
    pointer-events: none;
  }

  .watermark text {
    fill: rgba(255, 255, 255, 0.04);
    font: bold 16px 'Noto Sans', 'Noto Sans CJK SC', sans-serif;
  }
</style>
